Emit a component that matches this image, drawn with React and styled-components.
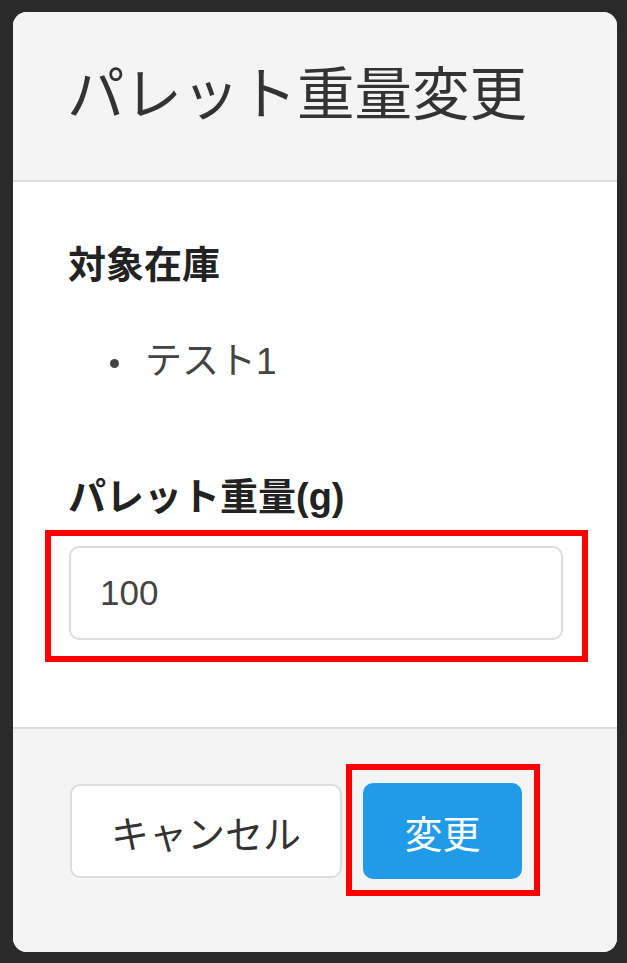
import React from "react";
import styled, { createGlobalStyle } from "styled-components";

const Global = createGlobalStyle`
  html, body {
    margin: 0;
    padding: 0;
    background: #2a2a2a;
  }
  body {
    font-family: "Liberation Sans", "Noto Sans CJK JP", sans-serif;
  }
`;

const Page = styled.div`
  padding: 12px 0 0 13px;
  width: 627px;
  height: 963px;
  box-sizing: border-box;
`;

const Modal = styled.div`
  width: 604px;
  height: 940px;
  border-radius: 14px;
  overflow: hidden;
  background: #fff;
  display: flex;
  flex-direction: column;
  box-sizing: border-box;
`;

const Header = styled.div`
  height: 170px;
  flex: none;
  box-sizing: border-box;
  padding: 48px 0 0 54px;
  background: #f4f4f4;
  border-bottom: 2px solid #dcdcdc;
`;

const Title = styled.h4`
  margin: 0;
  font-size: 57.5px;
  line-height: 70px;
  font-weight: 400;
  color: #333;
`;

const Body = styled.div`
  height: 545px;
  flex: none;
  box-sizing: border-box;
  padding: 60px 55px 0 55px;
  background: #fff;
`;

const Label = styled.div`
  font-size: 38px;
  line-height: 46px;
  font-weight: 700;
  color: #222;
  margin-top: ${(p) => p.$top || 0}px;
`;

const List = styled.ul`
  list-style: none;
  margin: 51px 0 0 0;
  padding: 0 0 0 77px;
`;

const Item = styled.li`
  position: relative;
  font-size: 37px;
  line-height: 46px;
  color: #444;

  &::before {
    content: "";
    position: absolute;
    left: -35px;
    top: 20px;
    width: 9px;
    height: 9px;
    border-radius: 50%;
    background: #444;
  }
`;

const Highlight = styled.div`
  border: 6px solid #ff0000;
  box-sizing: border-box;
  flex: none;
`;

const FieldBox = styled(Highlight)`
  margin: 10px 0 0 -23px;
  width: 543px;
  padding: 10px 19px 16px 18px;
`;

const Input = styled.input`
  display: block;
  width: 494px;
  height: 94px;
  box-sizing: border-box;
  border: 2px solid #dcdcdc;
  border-radius: 10px;
  padding: 0 0 0 29px;
  font-family: inherit;
  font-size: 35px;
  color: #444;
  background: #fff;
  outline: none;
`;

const Footer = styled.div`
  flex: 1;
  box-sizing: border-box;
  background: #f4f4f4;
  border-top: 2px solid #dcdcdc;
  padding: 35px 0 0 57px;
  display: flex;
  align-items: flex-start;
  gap: 4px;
`;

const Button = styled.button`
  box-sizing: border-box;
  font-family: inherit;
  font-size: 38px;
  border-radius: 10px;
  cursor: pointer;
  display: flex;
  align-items: center;
  justify-content: center;
  padding: 0;
  border: 2px solid ${(p) => (p.$primary ? "#219be8" : "#dcdcdc")};
  background: ${(p) => (p.$primary ? "#219be8" : "#fff")};
  color: ${(p) => (p.$primary ? "#fff" : "#333")};
  width: ${(p) => (p.$primary ? 159 : 272)}px;
  height: ${(p) => (p.$primary ? 96 : 94)}px;
  margin-top: ${(p) => (p.$primary ? 0 : 20)}px;
`;

const ButtonBox = styled(Highlight)`
  padding: 13px 12px 11px 11px;
`;

export default function App() {
  return (
    <Page>
      <Global />
      <Modal>
        <Header>
          <Title>パレット重量変更</Title>
        </Header>
        <Body>
          <Label>対象在庫</Label>
          <List>
            <Item>テスト1</Item>
          </List>
          <Label $top={89}>パレット重量(g)</Label>
          <FieldBox>
            <Input defaultValue="100" />
          </FieldBox>
        </Body>
        <Footer>
          <Button>キャンセル</Button>
          <ButtonBox>
            <Button $primary>変更</Button>
          </ButtonBox>
        </Footer>
      </Modal>
    </Page>
  );
}
